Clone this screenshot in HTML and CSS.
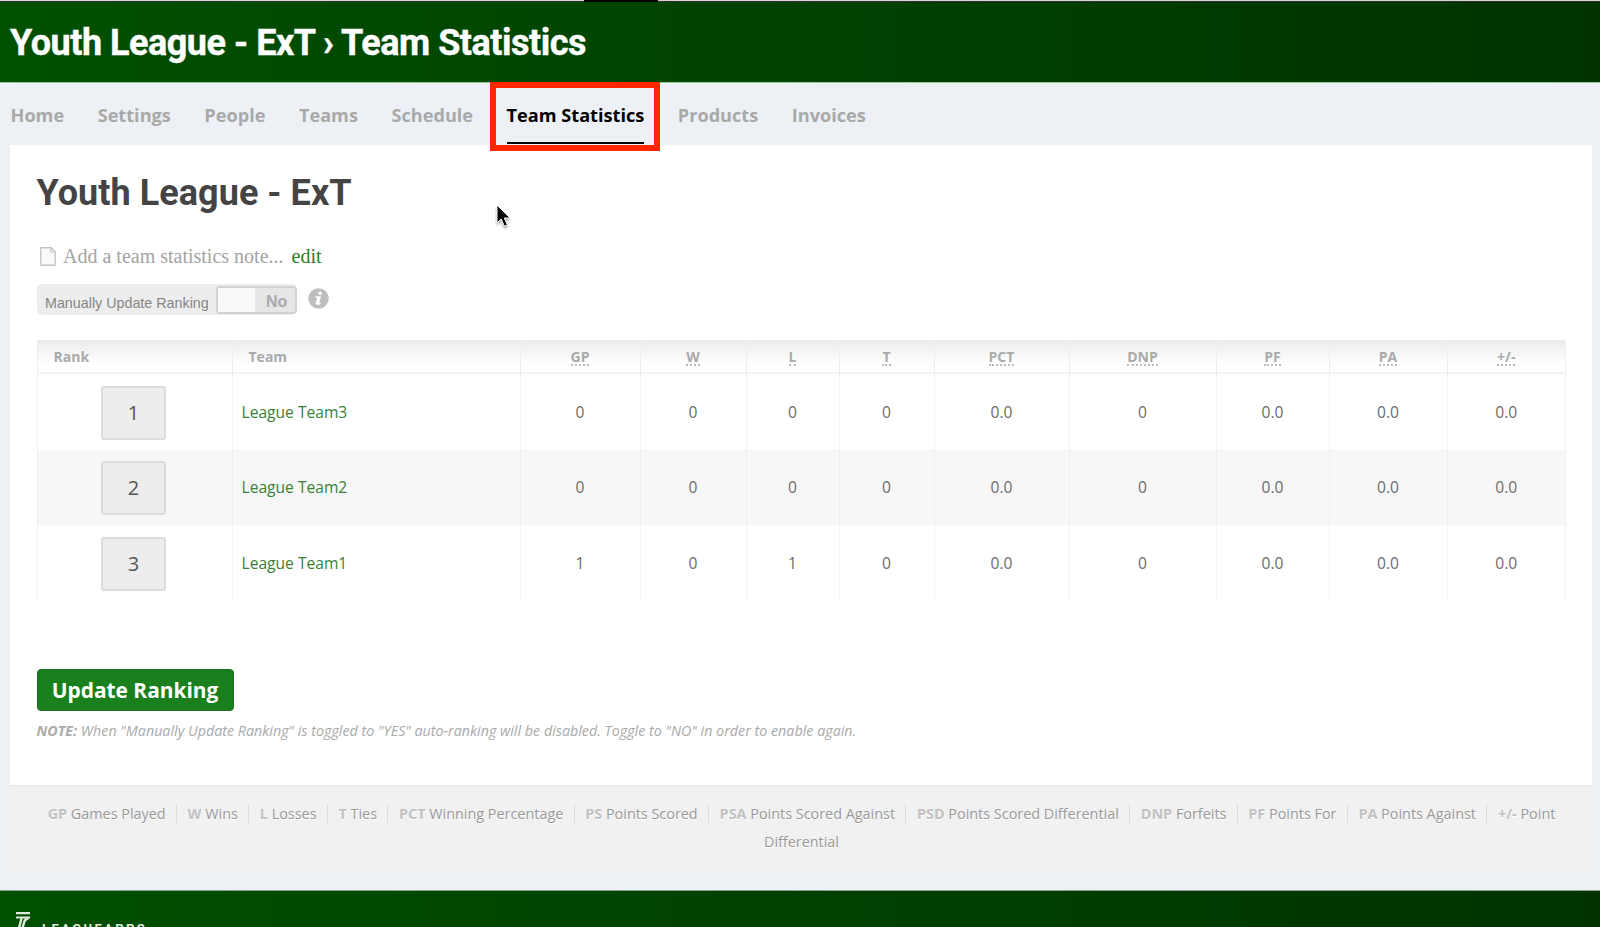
FILE: index.html
```html
<!DOCTYPE html>
<html lang="en">
<head>
  <meta charset="UTF-8">
  <meta name="viewport" content="width=device-width, initial-scale=1.0">
  <title>Youth League - ExT › Team Statistics</title>
  <link rel="stylesheet" href="styles.css">
</head>
<body>
  <div class="browser-edge"><div class="browser-tab"></div></div>
  <header class="site-header">
    <div class="site-title">Youth League - ExT › Team Statistics</div>
  </header>

  <nav class="main-nav">
    <a>Home</a>
    <a>Settings</a>
    <a>People</a>
    <a>Teams</a>
    <a>Schedule</a>
    <a class="active">Team Statistics<span class="highlight"></span></a>
    <a>Products</a>
    <a>Invoices</a>
  </nav>

  <main class="card">
    <div class="content">
      <h1>Youth League - ExT</h1>
      <div class="note-row">
        <svg class="doc-icon" width="16" height="19" viewBox="0 0 16 19">
          <path d="M.75.75h10.5l4 4v13.5H.75z" fill="#fafafa" stroke="#c2c2c2" stroke-width="1.3"/>
          <path d="M11 .75v4.2h4.2" fill="none" stroke="#c2c2c2" stroke-width="1.1"/>
        </svg>
        <span class="note-text">Add a team statistics note...</span>
        <a class="edit">edit</a>
      </div>

      <div class="ranking-row">
        <div class="toggle-box">
          <span class="toggle-label">Manually Update Ranking</span>
          <div class="switch"><div class="knob"></div><span>No</span></div>
        </div>
        <svg class="info-icon" width="21" height="21" viewBox="0 0 21 21">
          <circle cx="10.5" cy="10.5" r="10.2" fill="#bebebe"/>
          <circle cx="12.1" cy="5.2" r="1.8" fill="#fff"/>
          <path d="M7.6 8.2h5.4l-1.7 6.5h1.5l-.4 1.5c-2.2 1-5.2.8-4.6-1.5L9.1 9.8H7.3z" fill="#fff"/>
        </svg>
      </div>

      <table>
        <colgroup>
          <col class="c-rank"><col class="c-team"><col class="c-gp"><col class="c-w"><col class="c-l"><col class="c-t">
          <col class="c-pct"><col class="c-dnp"><col class="c-pf"><col class="c-pa"><col class="c-diff">
        </colgroup>
        <thead>
          <tr>
            <th class="left">Rank</th>
            <th class="left">Team</th>
            <th><abbr>GP</abbr></th>
            <th><abbr>W</abbr></th>
            <th><abbr>L</abbr></th>
            <th><abbr>T</abbr></th>
            <th><abbr>PCT</abbr></th>
            <th><abbr>DNP</abbr></th>
            <th><abbr>PF</abbr></th>
            <th><abbr>PA</abbr></th>
            <th><abbr>+/-</abbr></th>
          </tr>
        </thead>
        <tbody>
          <tr>
            <td><div class="rank">1</div></td>
            <td class="team"><a>League Team3</a></td>
            <td>0</td><td>0</td><td>0</td><td>0</td><td>0.0</td><td>0</td><td>0.0</td><td>0.0</td><td>0.0</td>
          </tr>
          <tr>
            <td><div class="rank">2</div></td>
            <td class="team"><a>League Team2</a></td>
            <td>0</td><td>0</td><td>0</td><td>0</td><td>0.0</td><td>0</td><td>0.0</td><td>0.0</td><td>0.0</td>
          </tr>
          <tr>
            <td><div class="rank">3</div></td>
            <td class="team"><a>League Team1</a></td>
            <td>1</td><td>0</td><td>1</td><td>0</td><td>0.0</td><td>0</td><td>0.0</td><td>0.0</td><td>0.0</td>
          </tr>
        </tbody>
      </table>

      <button class="update">Update Ranking</button>
      <p class="hint"><strong>NOTE:</strong> When "Manually Update Ranking" is toggled to "YES" auto-ranking will be disabled. Toggle to "NO" in order to enable again.</p>
    </div>

    <!-- column abbreviations -->
    <div class="legend">
      <span><b>GP</b> Games Played</span>
      <span><b>W</b> Wins</span>
      <span><b>L</b> Losses</span>
      <span><b>T</b> Ties</span>
      <span><b>PCT</b> Winning Percentage</span>
      <span><b>PS</b> Points Scored</span>
      <span><b>PSA</b> Points Scored Against</span>
      <span><b>PSD</b> Points Scored Differential</span>
      <span><b>DNP</b> Forfeits</span>
      <span><b>PF</b> Points For</span>
      <span><b>PA</b> Points Against</span>
      <span><b>+/-</b> Point Differential</span>
    </div>
  </main>

  <footer class="site-footer">
    <svg class="logo" width="14" height="26" viewBox="0 0 14 26">
      <path d="M0 1.2h14M0 5.5h14" stroke="#dfeadf" stroke-width="2.2" fill="none"/>
      <path d="M5.6 6L1.5 22M12.5 6.5c-3 0-3.8 1.5-4.3 3.5L5 22" stroke="#dfeadf" stroke-width="2.4" fill="none"/>
    </svg>
    <span class="brand">LEAGUEAPPS</span>
  </footer>

  <svg class="cursor" width="16" height="26" viewBox="0 0 16 26">
    <path d="M1 1v18l4.2-4 3.2 7.2 3-1.3L8.3 14H14z" fill="#000" stroke="#fff" stroke-width="1"/>
  </svg>
</body>
</html>
```
FILE: styles.css
```css
* {
  box-sizing: border-box;
}
body {
  margin: 0;
  height: 927px;
  overflow: hidden;
  background: #edf1f5;
  font-family: "Open Sans", sans-serif;
  color: #6c6c6c;
}
.browser-edge {
  height: 2px;
  background: #d5d5d5;
  border-bottom: 1px solid #333;
}
.browser-tab {
  width: 74px;
  height: 2px;
  margin-left: 584px;
  background: #000;
}
.site-header {
  height: 81px;
  padding-left: 10px;
  background: linear-gradient(to right, #005000, #003300);
  border-bottom: 1px solid #8fd08f;
}
.site-title {
  font-family: Roboto, sans-serif;
  font-weight: bold;
  font-size: 36px;
  line-height: 82px;
  letter-spacing: -0.48px;
  color: #fff;
  -webkit-text-stroke: 0.4px #fff;
}

.main-nav {
  display: flex;
  gap: 33.5px;
  height: 62px;
  padding-left: 10.5px;
  font-size: 18.15px;
  font-weight: bold;
  line-height: 65.5px;
  color: #a9a9a9;
}
.main-nav .active {
  position: relative;
  height: 61px;
  color: #000;
  border-bottom: 2px solid #000;
}
.highlight {
  position: absolute;
  z-index: 1;
  left: -17px;
  top: -1px;
  width: 170px;
  height: 69px;
  border: 6px solid #ff2600;
}

.card {
  width: 1582px;
  margin-left: 10px;
}
.content {
  height: 640px;
  padding: 22px 26px 0 26.5px;
  background: #fff;
}
h1 {
  margin: 0;
  font-family: Roboto, sans-serif;
  font-size: 36px;
  line-height: 52px;
  letter-spacing: 0.05px;
  color: #444;
}
.note-row {
  display: flex;
  align-items: center;
  height: 26px;
  margin-top: 24px;
  padding-left: 3px;
  font-family: "Liberation Serif", serif;
  font-size: 20px;
  line-height: 28px;
  color: #a4a4a4;
}
.note-text {
  margin-left: 7.5px;
}
.edit {
  margin-left: 8px;
  color: #2a7f2a;
}
.ranking-row {
  display: flex;
  align-items: flex-start;
  margin-top: 15px;
}
.toggle-box {
  display: flex;
  width: 260.5px;
  height: 31px;
  padding: 2px 0 0 8.5px;
  background: #ededed;
  border-radius: 5px;
}
.toggle-label {
  width: 171px;
  font-family: "Liberation Sans", sans-serif;
  font-size: 14.3px;
  line-height: 35px;
  white-space: nowrap;
  color: #858585;
}
.switch {
  display: flex;
  width: 81px;
  height: 28px;
  border: 2px solid #d2d2d2;
  border-radius: 4px;
  background: #e6e6e6;
  font-family: "Liberation Sans", sans-serif;
  font-size: 16px;
  font-weight: bold;
  line-height: 28px;
  color: #aaa;
}
.knob {
  width: 37px;
  margin-right: 11px;
  background: #f9f9f9;
}
.info-icon {
  margin: 4px 0 0 11px;
}

table {
  width: 1529.5px;
  margin-top: 25px;
  table-layout: fixed;
  border-spacing: 0;
  font-size: 15.6px;
  text-align: center;
}
.c-rank { width: 195px; }
.c-team { width: 288px; }
.c-gp { width: 120px; }
.c-w { width: 106px; }
.c-l { width: 93px; }
.c-t { width: 95px; }
.c-pct { width: 135px; }
.c-dnp { width: 147px; }
.c-pf { width: 113px; }
.c-pa { width: 118px; }
.c-diff { width: 119.5px; }
thead tr {
  background: linear-gradient(#ebebeb, #fff 70%);
}
th {
  height: 34px;
  padding: 0;
  border-left: 1px solid #eee;
  border-bottom: 2px solid #f3f3f3;
  font-size: 14px;
  line-height: 15px;
  color: #aaa;
}
th:last-child {
  border-right: 1px solid #eee;
}
th.left {
  padding-left: 16px;
  text-align: left;
}
th abbr {
  display: inline-block;
  padding-top: 3px;
  border-bottom: 2px dotted #bbb;
}
td {
  height: 75.5px;
  padding: 0;
  border-left: 1px dotted #e8e8e8;
}
td:last-child {
  border-right: 1px dotted #e8e8e8;
}
tbody tr:nth-child(even) {
  background: #f7f7f7;
}
.team {
  padding-left: 9px;
  text-align: left;
  color: #388238;
}
.rank {
  width: 65px;
  height: 54px;
  margin: 2px auto 0 63.5px;
  border: 2px solid #dcdcdc;
  border-radius: 3px;
  background: #ededed;
  font-size: 20px;
  line-height: 50px;
  color: #555;
}
.update {
  display: block;
  width: 197px;
  height: 42px;
  margin-top: 68px;
  padding: 0;
  border: 1px solid #18701b;
  border-radius: 4px;
  background: #1a801d;
  font-family: "Open Sans", sans-serif;
  font-size: 20.9px;
  font-weight: bold;
  color: #fff;
}
.hint {
  margin: 10px 0 0;
  font-size: 14.3px;
  font-style: italic;
  line-height: 20px;
  color: #aaa;
}

.legend {
  height: 87px;
  padding: 13px 19px 0 20px;
  background: #f1f1f1;
  border-top: 2px solid #ebebeb;
  font-size: 14.4px;
  line-height: 27.5px;
  text-align: center;
  color: #999;
  text-shadow: 0 1px 0 #fff;
}
.legend span {
  padding: 0 6.5px 0 10.7px;
  border-left: 1px solid #dcdcdc;
}
.legend span:first-child {
  padding-left: 0;
  border-left: none;
}
.legend span:last-child {
  padding-right: 0;
}
.legend b {
  color: #c2c2c2;
}

.site-footer {
  display: flex;
  height: 60px;
  margin-top: 18px;
  padding: 21px 0 0 16px;
  background: linear-gradient(to right, #005000, #003300);
  border-top: 1px solid #8fa08f;
}
.brand {
  margin: 7px 0 0 12px;
  font-family: Roboto, sans-serif;
  font-size: 13px;
  font-weight: bold;
  line-height: 20px;
  letter-spacing: 2.4px;
  color: #dfeadf;
}

.cursor {
  position: absolute;
  left: 496px;
  top: 204px;
  filter: drop-shadow(0 2px 1px rgba(0, 0, 0, 0.35));
}
```
